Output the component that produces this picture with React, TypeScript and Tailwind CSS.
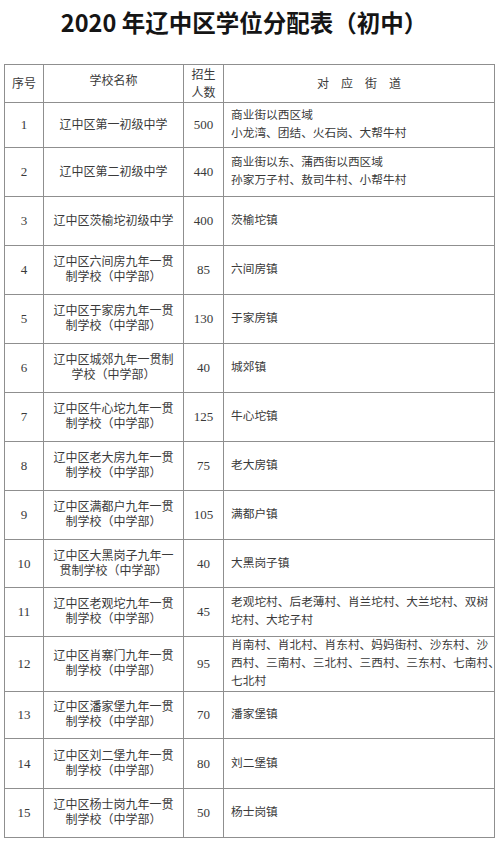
type Row = {
  no: string
  name: string[]
  count: string
  area: string[]
  h: number
}

const rows: Row[] = [
  { no: "1", name: ["辽中区第一初级中学"], count: "500", area: ["商业街以西区域", "小龙湾、团结、火石岗、大帮牛村"], h: 45 },
  { no: "2", name: ["辽中区第二初级中学"], count: "440", area: ["商业街以东、蒲西街以西区域", "孙家万子村、敖司牛村、小帮牛村"], h: 49 },
  { no: "3", name: ["辽中区茨榆坨初级中学"], count: "400", area: ["茨榆坨镇"], h: 49 },
  { no: "4", name: ["辽中区六间房九年一贯", "制学校（中学部）"], count: "85", area: ["六间房镇"], h: 49 },
  { no: "5", name: ["辽中区于家房九年一贯", "制学校（中学部）"], count: "130", area: ["于家房镇"], h: 49 },
  { no: "6", name: ["辽中区城郊九年一贯制", "学校（中学部）"], count: "40", area: ["城郊镇"], h: 49 },
  { no: "7", name: ["辽中区牛心坨九年一贯", "制学校（中学部）"], count: "125", area: ["牛心坨镇"], h: 49 },
  { no: "8", name: ["辽中区老大房九年一贯", "制学校（中学部）"], count: "75", area: ["老大房镇"], h: 49 },
  { no: "9", name: ["辽中区满都户九年一贯", "制学校（中学部）"], count: "105", area: ["满都户镇"], h: 49 },
  { no: "10", name: ["辽中区大黑岗子九年一", "贯制学校（中学部）"], count: "40", area: ["大黑岗子镇"], h: 48 },
  { no: "11", name: ["辽中区老观坨九年一贯", "制学校（中学部）"], count: "45", area: ["老观坨村、后老薄村、肖兰坨村、大兰坨村、双树", "坨村、大坨子村"], h: 49 },
  { no: "12", name: ["辽中区肖寨门九年一贯", "制学校（中学部）"], count: "95", area: ["肖南村、肖北村、肖东村、妈妈街村、沙东村、沙", "西村、三南村、三北村、三西村、三东村、七南村、", "七北村"], h: 55 },
  { no: "13", name: ["辽中区潘家堡九年一贯", "制学校（中学部）"], count: "70", area: ["潘家堡镇"], h: 47 },
  { no: "14", name: ["辽中区刘二堡九年一贯", "制学校（中学部）"], count: "80", area: ["刘二堡镇"], h: 50 },
  { no: "15", name: ["辽中区杨士岗九年一贯", "制学校（中学部）"], count: "50", area: ["杨士岗镇"], h: 49 },
]

export default function App() {
  return (
    <div className="w-[500px] h-[841px] bg-white overflow-hidden font-['Liberation_Serif','Noto_Sans_CJK_SC',serif] text-[#3a3a3a]">
      <div className="h-[64px] pt-[7px] pr-[12px] text-center">
        <h1 className="font-['Noto_Sans_CJK_SC',sans-serif] font-bold text-[23.5px] leading-[30px] text-[#151515]">
          2020 年辽中区学位分配表（初中）
        </h1>
      </div>

      <table className="ml-[4px] w-[490px] table-fixed border-collapse text-[12px]">
        <colgroup>
          <col className="w-[39px]" />
          <col className="w-[140px]" />
          <col className="w-[40px]" />
          <col className="w-[271px]" />
        </colgroup>
        <thead>
          <tr>
            <th className="h-[38px] border border-[#8f8f8f] font-normal text-center">序号</th>
            <th className="h-[38px] border border-[#8f8f8f] font-normal text-center pb-[6px]">学校名称</th>
            <th className="h-[38px] border border-[#8f8f8f] font-normal text-center leading-[18px]">
              招生
              <br />
              人数
            </th>
            <th className="h-[38px] border border-[#8f8f8f] font-normal text-center tracking-[12px] pl-[12px]">对应街道</th>
          </tr>
        </thead>
        <tbody>
          {rows.map((r) => (
            <tr key={r.no}>
              <td style={{ height: r.h }} className="border border-[#8f8f8f] text-center text-[13px]">
                {r.no}
              </td>
              <td className="border border-[#8f8f8f] text-center leading-[15px] whitespace-nowrap">
                {r.name.map((l, i) => (
                  <div key={i}>{l}</div>
                ))}
              </td>
              <td className="border border-[#8f8f8f] text-center text-[13px]">{r.count}</td>
              <td className="border border-[#8f8f8f] pl-[7px] text-[11.7px] leading-[18px] whitespace-nowrap">
                {r.area.map((l, i) => (
                  <div key={i}>{l}</div>
                ))}
              </td>
            </tr>
          ))}
        </tbody>
      </table>
    </div>
  )
}
